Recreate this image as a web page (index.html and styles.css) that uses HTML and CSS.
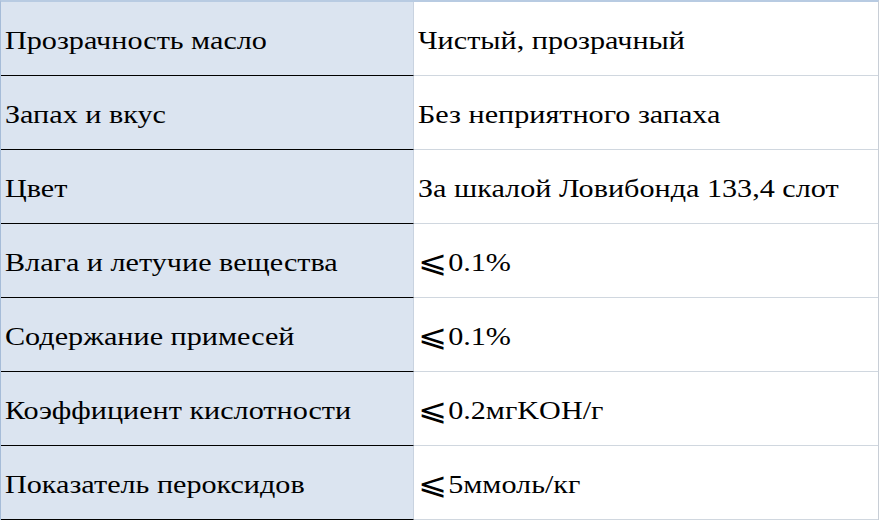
FILE: index.html
```html
<!DOCTYPE html>
<html>
<head>
<meta charset="utf-8">
<link rel="stylesheet" href="styles.css">
</head>
<body>
<div class="sheet">
  <div class="row"><div class="name"><span class="txt">Прозрачность масло</span></div><div class="val"><span class="txt">Чистый, прозрачный</span></div></div>
  <div class="row"><div class="name"><span class="txt">Запах и вкус</span></div><div class="val"><span class="txt">Без неприятного запаха</span></div></div>
  <div class="row"><div class="name"><span class="txt">Цвет</span></div><div class="val"><span class="txt">За шкалой Ловибонда 133,4 слот</span></div></div>
  <div class="row"><div class="name"><span class="txt">Влага и летучие вещества</span></div><div class="val"><span class="txt"><span class="le">⩽</span>0.1%</span></div></div>
  <div class="row"><div class="name"><span class="txt">Содержание примесей</span></div><div class="val"><span class="txt"><span class="le">⩽</span>0.1%</span></div></div>
  <div class="row"><div class="name"><span class="txt">Коэффициент кислотности</span></div><div class="val"><span class="txt"><span class="le">⩽</span>0.2мгKOH/г</span></div></div>
  <div class="row"><div class="name"><span class="txt">Показатель пероксидов</span></div><div class="val"><span class="txt"><span class="le">⩽</span>5ммоль/кг</span></div></div>
</div>
</body>
</html>
```
FILE: styles.css
```css
html, body {
  margin: 0;
  padding: 0;
  background: #ffffff;
}
.sheet {
  width: 877px;
  border-top: 2px solid #b8cbe2;
  border-left: 1px solid #a6bcd8;
  border-right: 1px solid #c8ced6;
  color: #000;
}
.row {
  display: grid;
  grid-template-columns: 413px 1fr;
  height: 74px;
}
.name, .val {
  display: flex;
  align-items: center;
  padding: 5px 0 0 4px;
  box-sizing: border-box;
  white-space: nowrap;
  overflow: hidden;
}
.name {
  background: #dbe4f0;
  border-bottom: 1px solid #000;
  border-right: 1px solid #c9d3e0;
}
.val {
  border-bottom: 1px solid #d0d7df;
  padding-left: 4px;
}
.txt {
  display: inline-block;
  font-family: "Liberation Serif";
  font-size: 26px;
  line-height: 30px;
  transform: scaleX(1.16);
  transform-origin: left center;
}
.le {
  font-family: "DejaVu Sans";
  font-weight: 200;
  font-size: 30px;
  line-height: 20px;
  vertical-align: -1px;
  margin-right: 1px;
}
```
